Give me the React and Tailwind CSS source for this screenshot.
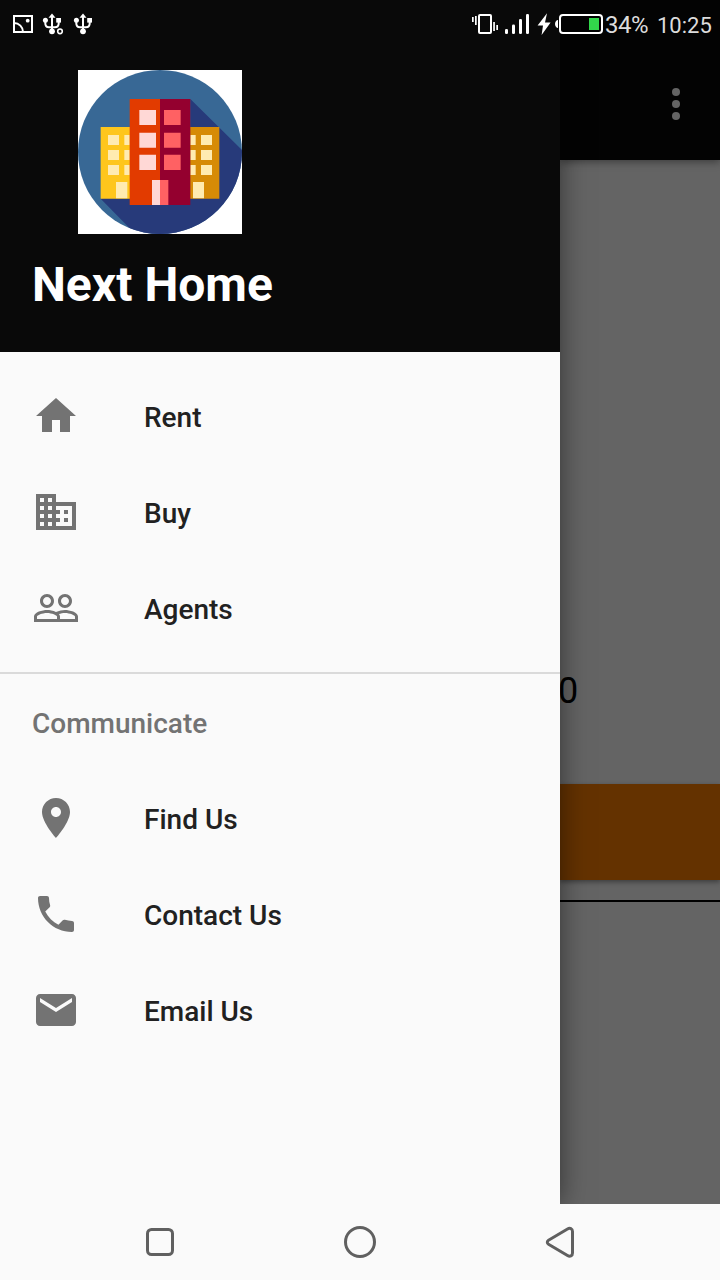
const icons = {
  home: 'M10 20v-6h4v6h5v-8h3L12 3 2 12h3v8z',
  domain:
    'M12 7V3H2v18h20V7H12zM6 19H4v-2h2v2zm0-4H4v-2h2v2zm0-4H4V9h2v2zm0-4H4V5h2v2zm4 12H8v-2h2v2zm0-4H8v-2h2v2zm0-4H8V9h2v2zm0-4H8V5h2v2zm10 12h-8v-2h2v-2h-2v-2h2v-2h-2V9h8v10zm-2-8h-2v2h2v-2zm0 4h-2v2h2v-2z',
  people:
    'M16.5 13c-1.2 0-3.07.34-4.5 1-1.43-.67-3.3-1-4.5-1C5.33 13 1 14.08 1 16.25V19h22v-2.75c0-2.17-4.33-3.25-6.5-3.25zm-4 4.5h-10v-1.25c0-.54 2.56-1.75 5-1.75s5 1.21 5 1.75v1.25zm9 0H14v-1.25c0-.46-.2-.86-.52-1.22.88-.3 1.96-.53 3.02-.53 2.44 0 5 1.21 5 1.75v1.25zM7.5 12c1.93 0 3.5-1.57 3.5-3.5S9.43 5 7.5 5 4 6.57 4 8.5 5.57 12 7.5 12zm0-5.5c1.1 0 2 .9 2 2s-.9 2-2 2-2-.9-2-2 .9-2 2-2zm9 5.5c1.93 0 3.5-1.57 3.5-3.5S18.43 5 16.5 5 13 6.57 13 8.5s1.57 3.5 3.5 3.5zm0-5.5c1.1 0 2 .9 2 2s-.9 2-2 2-2-.9-2-2 .9-2 2-2z',
  place:
    'M12 2C8.13 2 5 5.13 5 9c0 5.25 7 13 7 13s7-7.75 7-13c0-3.87-3.13-7-7-7zm0 9.5c-1.38 0-2.5-1.12-2.5-2.5s1.12-2.5 2.5-2.5 2.5 1.12 2.5 2.5-1.12 2.5-2.5 2.5z',
  phone:
    'M20 15.5c-1.25 0-2.45-.2-3.57-.57-.35-.11-.74-.03-1.02.24l-2.2 2.2c-2.83-1.44-5.15-3.75-6.59-6.59l2.2-2.21c.28-.26.36-.65.25-1C8.7 6.45 8.5 5.25 8.5 4c0-.55-.45-1-1-1H4c-.55 0-1 .45-1 1 0 9.39 7.61 17 17 17 .55 0 1-.45 1-1v-3.5c0-.55-.45-1-1-1z',
  mail: 'M20 4H4c-1.1 0-1.99.9-1.99 2L2 18c0 1.1.9 2 2 2h16c1.1 0 2-.9 2-2V6c0-1.1-.9-2-2-2zm0 4l-8 5-8-5V6l8 5 8-5v2z',
};

const primary = [
  { label: 'Rent', icon: icons.home },
  { label: 'Buy', icon: icons.domain },
  { label: 'Agents', icon: icons.people },
];

const communicate = [
  { label: 'Find Us', icon: icons.place },
  { label: 'Contact Us', icon: icons.phone },
  { label: 'Email Us', icon: icons.mail },
];

function NavItem({ label, icon }) {
  return (
    <li className="flex h-24 items-center gap-16 px-8">
      <svg viewBox="0 0 24 24" className="size-12 shrink-0 fill-[#737373]">
        <path d={icon} />
      </svg>
      <span className="pt-1 text-[28px] leading-8 font-medium text-[#212121]">{label}</span>
    </li>
  );
}

function UsbIcon({ gear }) {
  return (
    <svg viewBox="0 0 24 24" className="size-6" fill="none" stroke="#fff" strokeWidth="2">
      <path d="M12 20V4M5.3 9v2.2c0 2.800 1.500 4 3.700 4h6c2.200 0 3.700-1.200 3.700-4V9" />
      <path d="M12 1.5 15.5 5.7h-7z" fill="#fff" stroke="none" />
      <circle cx="5.4" cy="8.3" r="2.5" fill="#fff" stroke="none" />
      <path d="M16.2 6h4.800v4.600h-4.800z" fill="#fff" stroke="none" />
      <circle cx="12" cy="19.300" r="2.900" fill="#fff" stroke="none" />
      {gear && <circle cx="20" cy="19.300" r="2.300" fill="#090909" stroke="#fff" strokeWidth="1.600" />}
    </svg>
  );
}

function StatusBar() {
  return (
    <div className="absolute inset-x-0 top-0 flex h-12 items-center justify-between pl-3">
      <div className="flex items-center">
        <svg viewBox="0 0 22 22" className="mr-1.5 size-[22px]" fill="none" stroke="#fff" strokeWidth="2">
          <path d="M2 3h18v16H2zM2 10c5 0 9 4 9 9" />
          <circle cx="15.700" cy="7.700" r="1.900" fill="#fff" stroke="none" />
        </svg>
        <div className="flex gap-[7px]">
          <UsbIcon gear />
          <UsbIcon />
        </div>
      </div>
      <div className="flex h-12 items-center">
        <svg viewBox="470 0 135 48" className="h-12 w-[135px]" fill="#fff">
          <path d="M472 17h1.700v5H472zM475 16h1.700v9H475zM493.200 22h1.700v9h-1.700zM496.300 25h1.700v5h-1.700z" />
          <rect x="479" y="15" width="12" height="18" rx="1" fill="none" stroke="#fff" strokeWidth="2" />
          <rect x="505" y="29" width="3" height="5" rx="1.300" />
          <rect x="512" y="24.500" width="3" height="9.500" rx="1.300" />
          <rect x="519" y="19" width="3" height="15" rx="1.300" />
          <rect x="526" y="14" width="3" height="20" rx="1.300" />
          <path d="M547 13.300 537.600 25.500h5.400l-1.400 9.400 9-12.400h-5.600z" />
          <path d="M558 20v8c-1.600 0-3-2-3-4s1.400-4 3-4z" />
          <rect x="560" y="15" width="42" height="18" rx="3" fill="none" stroke="#fff" strokeWidth="2" />
          <rect x="589" y="18" width="10" height="12" fill="#32d74b" />
        </svg>
        <span className="w-[52px] pt-0.5 text-[24px] leading-7 tracking-[-0.5px] text-[#dcdcdc]">34%</span>
        <span className="w-[63px] pt-[3px] text-[22px] leading-7 text-[#dcdcdc]">10:25</span>
      </div>
    </div>
  );
}

function Logo() {
  return (
    <svg viewBox="24 24 492 492" className="ml-[46px] size-[164px] bg-white">
      <defs>
        <clipPath id="disc">
          <circle cx="270" cy="270" r="246" />
        </clipPath>
      </defs>
      <g clipPath="url(#disc)">
        <path fill="#386895" d="M24 24h492v492H24z" />
        <path fill="#273a7a" d="M361 111 520 268V520H200L92 410l269-60z" />
      </g>
      <path fill="#fec61c" d="M92 195h88v215H92z" />
      <path fill="#d68b06" d="M360 195h88v215h-88z" />
      <path
        fill="#ffebb0"
        d="M114 219h33v30h-33zM163 219h16v30h-16zM114 264h33v30h-33zM163 264h16v30h-16zM114 309h33v30h-33zM163 309h16v30h-16zM138 360h34v49h-34zM361 219h16v30h-16zM393 219h33v30h-33zM361 264h16v30h-16zM393 264h33v30h-33zM361 309h16v30h-16zM393 309h33v30h-33zM369 360h33v49h-33z"
      />
      <path fill="#e23b00" d="M179 111h91v318h-91z" />
      <path fill="#94002f" d="M270 111h91v318h-91z" />
      <path fill="#ffd8d6" d="M208 144h50v45h-50zM208 212h50v45h-50zM208 278h50v46h-50zM246 354h24v75h-24z" />
      <path fill="#ff6163" d="M282 144h50v45h-50zM282 212h50v45h-50zM282 278h50v46h-50zM270 354h25v75h-25z" />
    </svg>
  );
}

function Drawer() {
  return (
    <aside className="relative flex w-[560px] shrink-0 flex-col bg-[#fafafa] shadow-[0_0_26px_rgba(0,0,0,0.5)]">
      <header className="flex h-[352px] flex-col bg-[#090909] px-8 pt-[70px]">
        <Logo />
        <h1 className="mt-[23px] text-[48px] leading-[56px] font-bold text-white">Next Home</h1>
      </header>
      <ul className="pt-4 pb-4">
        {primary.map((item) => (
          <NavItem key={item.label} {...item} />
        ))}
      </ul>
      <h2 className="flex h-[98px] items-center border-t-2 border-[#dadada] px-8 pt-1 text-[28px] font-medium text-[#737373]">
        Communicate
      </h2>
      <ul>
        {communicate.map((item) => (
          <NavItem key={item.label} {...item} />
        ))}
      </ul>
    </aside>
  );
}

function DimmedPage() {
  return (
    <main className="flex min-w-0 flex-1 flex-col bg-[#646464]">
      <div className="flex h-40 items-end justify-end bg-[#030303] px-10 pb-10 shadow-[0_2px_8px_rgba(0,0,0,0.4)]">
        <svg viewBox="0 0 8 32" className="h-8 w-2 fill-[#646464]">
          <circle cx="4" cy="4" r="4" />
          <circle cx="4" cy="16" r="4" />
          <circle cx="4" cy="28" r="4" />
        </svg>
      </div>
      <div className="flex h-[624px] items-end pb-[72px]">
        <span className="-ml-[2px] text-[36px] leading-[42px] text-black">0</span>
      </div>
      <div className="h-24 bg-[#643200] shadow-[0_2px_5px_rgba(0,0,0,0.4)]" />
      <div className="mt-5 h-0.5 bg-black" />
    </main>
  );
}

function SystemNav() {
  return (
    <nav className="relative h-[76px] bg-[#fafafa]">
      <svg viewBox="0 0 720 76" className="h-[76px] w-full" fill="none" stroke="#606060" strokeWidth="3" strokeLinejoin="round">
        <rect x="147.500" y="25.500" width="25" height="25" rx="4" />
        <circle cx="360" cy="38" r="14.500" />
        <path d="M548.500 36.200 567.500 25C570 23.500 572.500 24.500 572.500 27.500V49C572.500 52 570 53 567.500 51.500L548.500 40.200C546.900 39.200 546.900 37.200 548.500 36.200Z" />
      </svg>
    </nav>
  );
}

export default function App() {
  return (
    <div className="relative flex h-[1280px] w-[720px] flex-col overflow-hidden bg-[#fafafa] font-['Roboto',sans-serif]">
      <div className="flex h-[1204px] overflow-hidden">
        <Drawer />
        <DimmedPage />
      </div>
      <SystemNav />
      <StatusBar />
    </div>
  );
}
